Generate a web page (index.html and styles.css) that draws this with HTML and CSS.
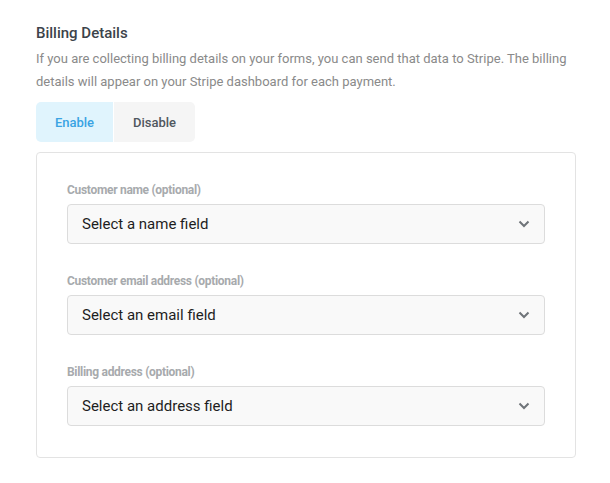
FILE: index.html
```html
<!DOCTYPE html>
<html>
<head>
<meta charset="utf-8">
<link rel="stylesheet" href="styles.css">
</head>
<body>
<div class="page">
  <h2 class="title">Billing Details</h2>
  <p class="desc">If you are collecting billing details on your forms, you can send that data to Stripe. The billing details will appear on your Stripe dashboard for each payment.</p>
  <div class="toggle">
    <button class="tbtn active">Enable</button>
    <button class="tbtn">Disable</button>
  </div>
  <div class="card">
    <div class="field">
      <div class="label">Customer name (optional)</div>
      <div class="select"><span>Select a name field</span>
        <svg class="chev" width="12" height="8" viewBox="0 0 12 8"><path d="M1.5 1.5 L6 6 L10.5 1.5" fill="none" stroke="#6f7479" stroke-width="2"/></svg>
      </div>
    </div>
    <div class="field">
      <div class="label">Customer email address (optional)</div>
      <div class="select"><span>Select an email field</span>
        <svg class="chev" width="12" height="8" viewBox="0 0 12 8"><path d="M1.5 1.5 L6 6 L10.5 1.5" fill="none" stroke="#6f7479" stroke-width="2"/></svg>
      </div>
    </div>
    <div class="field">
      <div class="label">Billing address (optional)</div>
      <div class="select"><span>Select an address field</span>
        <svg class="chev" width="12" height="8" viewBox="0 0 12 8"><path d="M1.5 1.5 L6 6 L10.5 1.5" fill="none" stroke="#6f7479" stroke-width="2"/></svg>
      </div>
    </div>
  </div>
</div>
</body>
</html>
```
FILE: styles.css
```css
html, body {
  margin: 0;
  padding: 0;
  background: #fff;
  font-family: Roboto, "Liberation Sans", sans-serif;
}
.page {
  padding: 23px 34px 0 36px;
}
.title {
  margin: 0;
  font-size: 15px;
  font-weight: 500;
  color: #3c434a;
  line-height: 20px;
}
.desc {
  margin: 4px 0 9px;
  font-size: 13px;
  line-height: 23px;
  color: #8a8a8a;
}
.toggle {
  display: inline-flex;
  border-radius: 5px;
  overflow: hidden;
  gap: 1px;
  background: #fff;
}
.tbtn {
  border: 0;
  margin: 0;
  height: 40px;
  font-family: inherit;
  font-size: 13px;
  font-weight: 500;
  color: #50575e;
  background: #f5f5f5;
  padding: 0;
  width: 81px;
}
.tbtn.active {
  width: 77px;
  background: #e0f4fd;
  color: #3aa3e3;
}
.card {
  margin-top: 10px;
  border: 1px solid #e3e3e3;
  border-radius: 4px;
  padding: 30px 30px 31px;
  display: flex;
  flex-direction: column;
  gap: 30px;
}
.label {
  font-size: 12px;
  font-weight: 700;
  color: #a7aaad;
  letter-spacing: -0.3px;
  line-height: 14px;
  margin-bottom: 7px;
}
.select {
  height: 38px;
  border: 1px solid #dcdcdc;
  border-radius: 4px;
  background: #f9f9f9;
  display: flex;
  align-items: center;
  justify-content: space-between;
  padding: 0 14px 0 14px;
  font-size: 15px;
  color: #1e1e1e;
}
.chev {
  display: block;
}
```
